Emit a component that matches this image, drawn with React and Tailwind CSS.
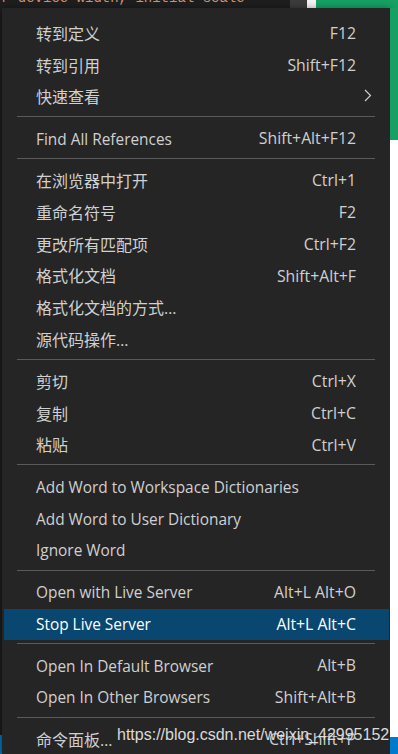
import React from 'react';

const SEP = 'sep';

const items = [
	{ label: '转到定义', keys: 'F12' },
	{ label: '转到引用', keys: 'Shift+F12' },
	{ label: '快速查看', sub: true },
	SEP,
	{ label: 'Find All References', keys: 'Shift+Alt+F12' },
	SEP,
	{ label: '在浏览器中打开', keys: 'Ctrl+1' },
	{ label: '重命名符号', keys: 'F2' },
	{ label: '更改所有匹配项', keys: 'Ctrl+F2' },
	{ label: '格式化文档', keys: 'Shift+Alt+F' },
	{ label: '格式化文档的方式…' },
	{ label: '源代码操作…' },
	SEP,
	{ label: '剪切', keys: 'Ctrl+X' },
	{ label: '复制', keys: 'Ctrl+C' },
	{ label: '粘贴', keys: 'Ctrl+V' },
	SEP,
	{ label: 'Add Word to Workspace Dictionaries' },
	{ label: 'Add Word to User Dictionary' },
	{ label: 'Ignore Word' },
	SEP,
	{ label: 'Open with Live Server', keys: 'Alt+L Alt+O' },
	{ label: 'Stop Live Server', keys: 'Alt+L Alt+C', active: true },
	SEP,
	{ label: 'Open In Default Browser', keys: 'Alt+B' },
	{ label: 'Open In Other Browsers', keys: 'Shift+Alt+B' },
	SEP,
	{ label: '命令面板…', keys: 'Ctrl+Shift+P' },
];

const font = "font-['Open_Sans','Noto_Sans_CJK_SC',sans-serif]";

const Row = ({ item }) => {
	const cjk = /[\u4e00-\u9fff]/.test(item.label);
	return (
		<div
			className={`ml-[2px] mr-[1px] h-[31.8px] flex items-center justify-between pl-[32px] ${
				item.sub ? 'pr-[17px]' : 'pr-[33px]'
			} ${item.active ? 'bg-[#094771] text-white' : 'text-[#d0d0d0]'}`}
		>
			<span className={cjk ? 'text-[16px]' : 'text-[15.4px]'}>{item.label}</span>
			{item.keys && <span className="text-[15.8px]">{item.keys}</span>}
			{item.sub && (
				<svg width="8" height="13" viewBox="0 0 8 13" className="-mt-[3px]">
					<path d="M1 1 L6.5 6.5 L1 12" fill="none" stroke="#cccccc" strokeWidth="1.2" />
				</svg>
			)}
		</div>
	);
};

const App = () => {
	return (
		<div className={`relative w-[398px] h-[754px] overflow-hidden bg-[#1e1e1e] ${font}`}>
			<div className="flex h-[8px]">
				<div className="w-[290px] overflow-hidden">
					<p className="-mt-[10px] pl-[1px] whitespace-nowrap font-['Liberation_Mono',monospace] text-[14px] leading-[16px] text-[#ce9178]">
						r device-width, initial-scale
					</p>
				</div>
				<div className="w-[17px] bg-[#3c3c3c]" />
				<div className="w-[9px] bg-[#f3f3f3]" />
				<div className="flex-1 bg-[#16a064]" />
			</div>

			<div className="flex h-[746px]">
				<div className="w-[2px] flex flex-col">
					<div className="flex-1 bg-[#1e1e1e]" />
					<div className="h-[19px] bg-[#007acc]" />
				</div>

				<div className="w-[388px] bg-[#252526] pt-[10px] shadow-[0_2px_8px_rgba(0,0,0,0.6)]">
					{items.map((item, i) =>
						item === SEP ? (
							<div key={i} className="h-[10px] pt-[3px] mx-[15px]">
								<div className="h-px bg-[#5a5a5a]" />
							</div>
						) : (
							<Row key={i} item={item} />
						)
					)}
				</div>

				<div className="w-[8px] flex flex-col">
					<div className="h-[132px] bg-[#16a064]" />
					<div className="flex-1 bg-[#ffffff]" />
					<div className="h-[17px] bg-[#007acc]" />
				</div>
			</div>

			<p className="absolute left-[117px] top-[727px] leading-[16px] whitespace-nowrap font-['Liberation_Sans',Arial,sans-serif] text-[16px] text-white/85 [text-shadow:0_0_1px_rgba(0,0,0,0.6)]">
				https://blog.csdn.net/weixin_42995152
			</p>
		</div>
	);
};

export default App;
